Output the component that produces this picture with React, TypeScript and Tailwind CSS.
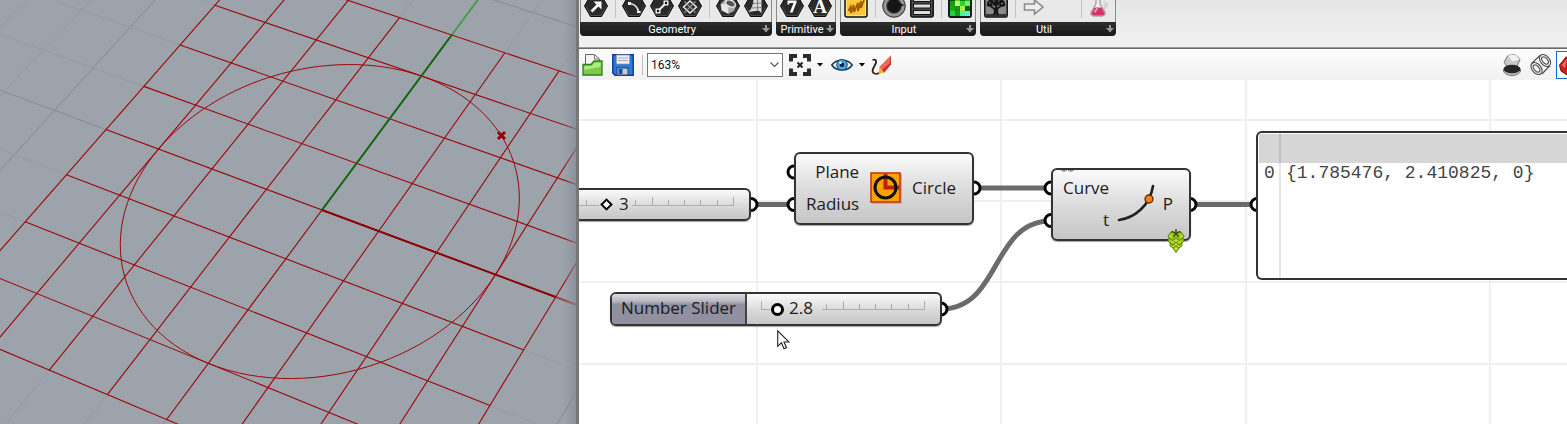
import React from "react";

/* ---------- Perspective viewport ---------- */

function project(x: number, y: number): [number, number] {
  const w = 1 - 0.00984 * x + 0.02245 * y;
  return [(322 + 52.96 * x + 42.57 * y) / w, (210 + 18.83 * x - 42.96 * y) / w];
}

function PlaneLine({ from, to, color, width = 1 }: { from: [number, number]; to: [number, number]; color: string; width?: number }) {
  const [x1, y1] = project(from[0], from[1]);
  const [x2, y2] = project(to[0], to[1]);
  return <line x1={x1} y1={y1} x2={x2} y2={y2} stroke={color} strokeWidth={width} />;
}

const outer = [-10, -9, -8, -7, -6, -5, -4, -3, -2, -1, 0, 1, 2, 3, 4, 5, 6, 7, 8];
const inner = [-4, -3, -2, -1, 0, 1, 2, 3, 4];

const circlePath =
  Array.from({ length: 121 }, (_, i) => {
    const a = (i / 120) * Math.PI * 2;
    const [x, y] = project(3 * Math.cos(a), 3 * Math.sin(a));
    return `${i ? "L" : "M"}${x.toFixed(2)} ${y.toFixed(2)}`;
  }).join("") + "Z";

function Viewport() {
  return (
    <section aria-label="Perspective viewport" className="relative w-[576px] shrink-0 overflow-hidden bg-[#9da3ab]">
      <svg className="absolute left-0 top-0 h-[424px] w-[576px]" viewBox="0 0 576 424">
        {outer.map((n) => (
          <g key={n}>
            <PlaneLine from={[n, -9]} to={[n, 12]} color={n % 5 ? "#959aa2" : "#858a92"} />
            <PlaneLine from={[-10, n]} to={[8, n]} color={n % 5 ? "#959aa2" : "#858a92"} />
          </g>
        ))}
        <PlaneLine from={[0, 4]} to={[0, 8]} color="#4b9a4e" width={2} />
        <PlaneLine from={[4, 0]} to={[6, 0]} color="#98484d" width={2} />
        {inner.map((n) => (
          <g key={n}>
            <PlaneLine from={[n, -4]} to={[n, 4]} color="#9c080c" width={1.1} />
            <PlaneLine from={[-4, n]} to={[4, n]} color="#9c080c" width={1.1} />
            <PlaneLine from={[4, n]} to={[4, n]} color="#9c080c" />
          </g>
        ))}
        <PlaneLine from={[0, 0]} to={[0, 4]} color="#0a6a0a" width={2} />
        <PlaneLine from={[0, 0]} to={[4, 0]} color="#8c0000" width={2} />
        <path d={circlePath} fill="none" stroke="#9c080c" strokeWidth="1" />
        <path d="M498 132l7 7M505 132l-7 7" stroke="#960000" strokeWidth="3" />
      </svg>
      <div className="absolute inset-y-0 right-0 w-3 bg-linear-to-r from-transparent to-[#848b97]/70" />
    </section>
  );
}

/* ---------- Ribbon ---------- */

function Hex({ children }: { children?: React.ReactNode }) {
  return (
    <svg viewBox="0 0 24 24" className="size-6">
      <path d="M6.5 1.5h11L23.5 12l-6 10.500h-11L.5 12z" fill="#2a2a2a" stroke="#0c0c0c" strokeLinejoin="round" />
      <path d="M2 12.500L7 21.500h10l5-9" fill="none" stroke="#555" strokeWidth=".8" />
      {children}
    </svg>
  );
}

const PointIcon = () => (
  <Hex>
    <path d="M7.500 17.500l7-7" stroke="#fff" strokeWidth="2.600" />
    <path d="M9.500 7.500h8v8z" fill="#fff" />
  </Hex>
);
const ArcIcon = () => (
  <Hex>
    <path d="M8 9.500c4.500.5 8 4 8.500 8.500" stroke="#eee" strokeWidth="1.600" fill="none" />
    <path d="M6 8h3v3H6zM15 17h3.500v2H15z" fill="#fff" />
  </Hex>
);
const LineIcon = () => (
  <Hex>
    <path d="M8 17l8-8" stroke="#fff" strokeWidth="1.800" />
    <path d="M6.200 15.200h3.600v3.600H6.200zM14.200 7.200h3.600v3.600h-3.600z" fill="#111" stroke="#fff" strokeWidth="1.300" />
  </Hex>
);
const GridIcon = () => (
  <Hex>
    <path d="M12 7l6.500 6-6.500 6-6.500-6z" fill="#333" stroke="#eee" strokeWidth="1.400" />
    <path d="M6.500 7.500l11 11M17.500 7.500l-11 11" stroke="#999" strokeWidth="1.100" />
  </Hex>
);
const BrepIcon = () => (
  <Hex>
    <path d="M4.500 10l5-5h7l4 6-2.500 6-5.500 3-7-3.500z" fill="#a8a8a8" />
    <ellipse cx="14.500" cy="9.500" rx="5" ry="3.200" transform="rotate(25 14.500 9.500)" fill="#555" stroke="#eee" strokeWidth="1.300" />
    <path d="M5 10.500l4-1 3.500 4-.5 6-6-3z" fill="#e6e6e6" />
  </Hex>
);
const MeshIcon = () => (
  <Hex>
    <path d="M9.500 4l8-1v16l-3-2.500-10 1.500c4-4 5-9 5-14z" fill="#dcdcdc" />
    <path d="M13.500 4v12.500M9 9.500l8.500-.500M7.500 14l10-.500" stroke="#777" strokeWidth=".9" />
  </Hex>
);
const IntegerIcon = () => (
  <Hex>
    <path d="M7.500 6.500h9v2l-4 10H9.800l3.800-9.500H9.300v1.500H7.500z" fill="#fff" />
  </Hex>
);
const LetterIcon = () => (
  <Hex>
    <text x="12" y="18.500" textAnchor="middle" fontFamily="Liberation Serif, serif" fontWeight="700" fontSize="19" fill="#fff">A</text>
  </Hex>
);
const GraphIcon = () => (
  <svg viewBox="0 0 24 24" className="size-6">
    <rect x="1" y="1" width="22" height="22" rx="2" fill="#ffe873" stroke="#111" strokeWidth="1.500" />
    <rect x="3" y="3" width="18" height="18" fill="#ffc83a" />
    <path d="M4.500 17l2-4 .5 6 2.500-8 .5 7 4-9v8l3-10v7l3-8" fill="none" stroke="#a35d00" strokeWidth="1.900" />
  </svg>
);
const KnobIcon = () => (
  <svg viewBox="0 0 24 24" className="size-6">
    <circle cx="12" cy="12" r="11.300" fill="#8b8b8b" stroke="#333" />
    <circle cx="12" cy="12" r="9" fill="#666" stroke="#b5b5b5" />
    <path d="M12 5a7 7 0 1 0 7 7.500l3.500-1.500-4-1.500A7 7 0 0 0 12 5z" fill="#151515" />
  </svg>
);
const ListIcon = () => (
  <svg viewBox="0 0 24 24" className="size-6">
    <rect x=".8" y="1" width="22.400" height="22" rx="2" fill="#4b4b4b" stroke="#111" strokeWidth="1.500" />
    <path d="M3.500 3.500h17v4h-17zM3.500 10h17v4h-17zM3.500 16.500h17v4h-17z" fill="#ddd" stroke="#111" />
  </svg>
);
const swatches = ["#173f0a", "#49d52e", "#0b7010", "#1fb81b", "#0aa00e", "#b5ff6a", "#27d727", "#6df072", "#10ad16", "#1e8f1c", "#9ff04e", "#09600b", "#2bcf45", "#12a016", "#4ff0a0", "#58f2cf"];
const SwatchIcon = () => (
  <svg viewBox="0 0 24 24" className="size-6">
    <rect x=".8" y=".8" width="22.400" height="22.400" rx="2" fill="#0b3d0b" stroke="#111" strokeWidth="1.500" />
    {swatches.map((c, i) => (
      <rect key={i} x={2 + (i % 4) * 5} y={2 + Math.floor(i / 4) * 5} width="5" height="5" fill={c} />
    ))}
  </svg>
);
const TreeIcon = () => (
  <svg viewBox="0 0 24 24" className="size-6">
    <rect x=".8" y="1" width="22.400" height="22" rx="1.500" fill="#8a8a8a" stroke="#111" strokeWidth="1.500" />
    <path d="M2 20h20v2H2z" fill="#333" />
    <path d="M9.500 21c2-2 1.500-5 1-7M14.500 21c-2-2-1.500-5-1-7" stroke="#161616" strokeWidth="2" fill="none" />
    <path d="M12 20V10M12 16L5 11M12 15l7-4M12 12L8 6M12 12l4-6M6 12l-3-1M18 12l3-1" stroke="#161616" strokeWidth="1.800" fill="none" />
    <path d="M3 12c-1-5 3-8 9-8s10 3 9 8c-3 1-4-1-6 0-2-1-4-1-6 0-2-1-3 1-6 0z" fill="#161616" />
    <path d="M5 9h1.500M9 7h1.500M14 7h1.500M17 9.500h2M8 11h1.500M14.500 11h1" stroke="#8a8a8a" strokeWidth="1.200" />
  </svg>
);
const ArrowIcon = () => (
  <svg viewBox="0 0 24 24" className="size-6">
    <path d="M2.500 10h10V6L21 13l-8.500 7v-4h-10z" fill="#eee" stroke="#8a8a8a" strokeWidth="1.600" />
  </svg>
);
const FlaskIcon = () => (
  <svg viewBox="0 0 24 24" className="size-6">
    <path d="M14 21l7-11-5-3z" fill="#d6d6d6" />
    <path d="M8 0h4v10l5 8.500c1 2-1 3.500-3 3.500H6c-2 0-4-1.500-3-3.500L8 10z" fill="#f3eef1" stroke="#8d7f86" />
    <path d="M6.500 13.500h7l3 5.500c.5 1.500-1 2.500-2.500 2.500H6c-1.500 0-3-1-2.500-2.500z" fill="#d6336c" />
    <path d="M5.500 17l3-3h2l-3 5z" fill="#f28bb0" />
  </svg>
);

const Sep = () => <span className="h-[18px] w-1.5 shrink-0 pl-[3px]"><span className="block h-full w-px bg-[#c4c4c4]" /></span>;
const Tool = ({ label, children }: { label: string; children: React.ReactNode }) => (
  <button type="button" aria-label={label} className="size-6 shrink-0">{children}</button>
);

function Group({ title, children }: { title: string; children: React.ReactNode }) {
  return (
    <div className="flex shrink-0 flex-col rounded-b-sm bg-[#e9e9e9]">
      <div className="flex h-[22px] items-end gap-1 overflow-hidden border-x border-[#8a8a8a] px-[3px] pb-1">{children}</div>
      <button type="button" className="flex h-3.5 items-center rounded-b-sm bg-linear-to-b from-[#2e2e2e] to-[#181818] px-0.5 font-['Roboto',sans-serif] text-[11px] leading-none text-white">
        <span className="flex-1 text-center">{title}</span>
        <svg viewBox="0 0 8 8" className="size-2">
          <path d="M3 0h2v3h3L4 7.500 0 3h3z" fill="#999" />
        </svg>
      </button>
    </div>
  );
}

function Ribbon() {
  return (
    <header className="flex h-12 items-start gap-1 overflow-hidden border-b border-[#9b9b9b] bg-linear-to-b from-[#e6e6e6] to-[#f1f1f1] pl-px">
      <Group title="Geometry">
        <Tool label="Point"><PointIcon /></Tool>
        <Sep />
        <Tool label="Arc"><ArcIcon /></Tool>
        <Tool label="Line"><LineIcon /></Tool>
        <Tool label="Plane"><GridIcon /></Tool>
        <Sep />
        <Tool label="Brep"><BrepIcon /></Tool>
        <Tool label="Mesh"><MeshIcon /></Tool>
      </Group>
      <Group title="Primitive">
        <Tool label="Integer"><IntegerIcon /></Tool>
        <Tool label="Text"><LetterIcon /></Tool>
      </Group>
      <Group title="Input">
        <Tool label="Graph mapper"><GraphIcon /></Tool>
        <Sep />
        <Tool label="Control knob"><KnobIcon /></Tool>
        <Tool label="Value list"><ListIcon /></Tool>
        <Sep />
        <Tool label="Colour swatch"><SwatchIcon /></Tool>
      </Group>
      <Group title="Util">
        <Tool label="Tree"><TreeIcon /></Tool>
        <Sep />
        <Tool label="Relay"><ArrowIcon /></Tool>
        <span className="w-6" />
        <Sep />
        <Tool label="Experiment"><FlaskIcon /></Tool>
      </Group>
    </header>
  );
}

/* ---------- Canvas toolbar ---------- */

const Caret = () => (
  <svg viewBox="0 0 6 4" className="h-1 w-1.5"><path d="M0 0h6L3 3.500z" fill="#000" /></svg>
);

function Toolbar() {
  return (
    <div className="flex h-8 items-center overflow-hidden border-t border-[#6a6a6a] bg-linear-to-b from-[#fdfdfd] to-[#f1f1f1] pl-[3px]">
      <button type="button" aria-label="Open" className="mr-2 shrink-0">
        <svg viewBox="0 0 22 24" className="h-6 w-[22px]">
          <path d="M3.500 11V1.500h9l5 4.500v6" fill="#f4f4f4" stroke="#666" />
          <path d="M12.500 1.500V6h5" fill="none" stroke="#777" />
          <path d="M1 11.500h8L12 8h8v14H1z" fill="#7ccb45" stroke="#2f7f14" strokeWidth="1.300" />
          <path d="M2.500 13h7.300l2.800-3.300H18.500v4L2.500 17z" fill="#b0e98a" />
        </svg>
      </button>
      <button type="button" aria-label="Save" className="shrink-0">
        <svg viewBox="0 0 22 22" className="size-[22px]">
          <path d="M.8.800h20.400v20.400H3L.8 19z" fill="#2b78d8" stroke="#123f96" strokeWidth="1.500" />
          <rect x="4.500" y="1" width="13" height="9" fill="#eee" stroke="#999" strokeWidth=".7" />
          <path d="M6 4h10M6 6.500h10" stroke="#aaa" />
          <rect x="5" y="14" width="11" height="7" fill="#c9c9c9" stroke="#123f96" />
          <rect x="6.500" y="15" width="4" height="5" fill="#174fb0" />
        </svg>
      </button>
      <span className="ml-2 h-5 border-l border-[#bdbdbd]" />
      <div className="relative ml-1 flex shrink-0 items-center">
        <select aria-label="Zoom level" defaultValue="163" className="h-6 w-[136px] appearance-none border border-[#767676] bg-white pl-[3px] font-['Roboto',sans-serif] text-xs text-[#111]">
          <option value="163">163%</option>
        </select>
        <svg viewBox="0 0 9 5" className="pointer-events-none absolute right-1 h-[5px] w-[9px]">
          <path d="M.5.500l4 4 4-4" fill="none" stroke="#555" strokeWidth="1.100" />
        </svg>
      </div>
      <button type="button" aria-label="Zoom extents" className="ml-1.5 flex shrink-0 items-center gap-1.5">
        <svg viewBox="0 0 22 22" className="size-[22px]">
          <path d="M2 7.500V2h6M14 2h6v5.500M20 14.500V20h-6M8 20H2v-5.500" fill="none" stroke="#2b2b2b" strokeWidth="4" />
          <path d="M8.500 8.500l5 5M13.500 8.500l-5 5" stroke="#222" strokeWidth="2" />
        </svg>
        <Caret />
      </button>
      <button type="button" aria-label="Preview" className="ml-2 flex shrink-0 items-center gap-1.5">
        <svg viewBox="0 0 22 16" className="h-4 w-[22px]">
          <path d="M.8 8C5 1.500 17 1.500 21.200 8 17 14.500 5 14.500.8 8z" fill="#e4f1f8" stroke="#16364a" strokeWidth="1.500" />
          <circle cx="11" cy="7.800" r="5.300" fill="#4aa5e0" stroke="#174f80" />
          <circle cx="11" cy="7.800" r="2.300" fill="#0b1d2c" />
          <circle cx="9.500" cy="5.800" r="1.200" fill="#fff" />
        </svg>
        <Caret />
      </button>
      <button type="button" aria-label="Sketch" className="ml-1.5 shrink-0">
        <svg viewBox="0 0 22 22" className="size-[22px]">
          <path d="M1.500 6c4-1.500 4.500 1.500 2.500 5S0 18 3.500 19.500c3.500 1 5.500-.5 7-2.500" fill="none" stroke="#3b1c14" strokeWidth="1.800" />
          <path d="M8.500 13L20 1.500v9L13 19z" fill="#c9302a" />
          <path d="M8.500 13L20 1.500l-1.500 8L11 16z" fill="#ee6a5c" />
          <path d="M8.500 13l4.500 5.500-5.500 1.500z" fill="#f0b73a" />
        </svg>
      </button>
      <span className="flex-1" />
      <button type="button" aria-label="No preview" className="mr-2 shrink-0">
        <svg viewBox="0 0 20 24" className="h-6 w-5">
          <path d="M2 9l4-6.500 7-1 5 5-3 7-9 1.500z" fill="#c8c8c8" stroke="#777" />
          <path d="M6 2.500l7-1 4.500 5-7 2z" fill="#f2f2f2" />
          <path d="M1.500 16.500v2c3 5.500 14 5.500 17 0v-2z" fill="#b9b9b9" stroke="#666" strokeWidth=".8" />
          <ellipse cx="10" cy="16" rx="8.500" ry="4.300" fill="#262626" />
        </svg>
      </button>
      <button type="button" aria-label="Wireframe preview" className="mr-1 shrink-0">
        <svg viewBox="0 0 22 24" className="h-6 w-[22px]" fill="none" stroke="#4a4a4a" strokeWidth="1.100">
          <ellipse cx="15" cy="7.500" rx="6.800" ry="4.500" transform="rotate(50 15 7.500)" />
          <ellipse cx="15" cy="7.500" rx="4.300" ry="2.400" transform="rotate(50 15 7.500)" />
          <ellipse cx="6.500" cy="15.500" rx="6.800" ry="4.500" transform="rotate(50 6.500 15.500)" />
          <ellipse cx="6.500" cy="15.500" rx="4.300" ry="2.400" transform="rotate(50 6.500 15.500)" />
          <path d="M10 2.500L1.500 10.500M20 12.500L12 21" />
        </svg>
      </button>
      <button type="button" aria-label="Shaded preview" className="h-7 w-[11px] shrink-0 overflow-hidden border border-r-0 border-[#0b6fd0] bg-white">
        <svg viewBox="0 0 24 24" className="h-6 w-6">
          <path d="M2.500 12L9 4h13v18H10l-6-4z" fill="#c91f1f" stroke="#7d0c0c" />
          <path d="M4.500 12L10 6l-2 9z" fill="#f06a5c" />
        </svg>
      </button>
    </div>
  );
}

/* ---------- Canvas nodes ---------- */

const nodeClass =
  "absolute flex rounded-md border-2 border-[#333] bg-linear-to-b from-[#fbfbfb] via-[#dcdcdc] to-[#c6c6c6] shadow-[0_1px_1px_rgba(0,0,0,0.35)]";

const Port = ({ x, y }: { x: number; y: number }) => <circle cx={x} cy={y} r="6" fill="#fff" stroke="#000" strokeWidth="3" />;

function Wires() {
  return (
    <svg className="absolute left-0 top-0 h-[344px] w-[988px]" viewBox="0 0 988 344" fill="none">
      <g stroke="#6b6b6b" strokeWidth="5">
        <path d="M172 124.500H215M395 108H472M611 124.500H678M362 229C422 229 412 141 472 141" />
      </g>
      <Port x={172} y={124.500} />
      <Port x={215} y={92} />
      <Port x={215} y={124.500} />
      <Port x={395} y={108} />
      <Port x={472} y={108} />
      <Port x={472} y={140.500} />
      <Port x={611} y={124.500} />
      <Port x={678} y={124.500} />
      <Port x={362} y={229} />
    </svg>
  );
}

function CircleNode() {
  return (
    <div className={`${nodeClass} left-[215px] top-[72px] h-[73px] w-[180px] items-center justify-between pb-0.5 pl-2.5 pr-4`}>
      <div className="flex flex-col items-end text-[17px] leading-8">
        <span>Plane</span>
        <span>Radius</span>
      </div>
      <svg viewBox="0 0 32 32" className="size-8">
        <rect x="2" y="2" width="30" height="30" fill="#b5b5b5" />
        <rect x="1" y="1" width="29" height="29" fill="#ffa200" stroke="#c93a10" strokeWidth="1.600" />
        <path d="M15.500 2v13.500H29" fill="none" stroke="#c01f10" strokeWidth="4" />
        <circle cx="15.500" cy="15.500" r="10.500" fill="none" stroke="#111" strokeWidth="3" />
      </svg>
      <span className="text-[17px]">Circle</span>
    </div>
  );
}

function CurveNode() {
  return (
    <div className={`${nodeClass} left-[472px] top-[88px] h-[73px] w-[140px] items-center justify-between pb-0.5 pl-2.5 pr-4`}>
      <div className="flex flex-col items-end text-[17px] leading-8">
        <span>Curve</span>
        <span>t</span>
      </div>
      <svg viewBox="0 0 40 40" className="size-10">
        <path d="M3 36C18 34 34 22 37 2" fill="none" stroke="#222" strokeWidth="2.600" strokeLinecap="round" />
        <circle cx="33" cy="15" r="4" fill="#f08010" stroke="#5a2a08" strokeWidth="1.300" />
      </svg>
      <span className="text-[17px]">P</span>
      <svg viewBox="0 0 14 4" className="absolute left-2 top-0 h-1 w-3.5">
        <path d="M0 0h6Q3 3 0 0M7 0h6Q10 3 7 0" fill="#999" stroke="#999" />
      </svg>
      <svg viewBox="0 0 18 24" className="absolute -bottom-3.5 right-1 h-6 w-[18px]">
        <path d="M9 4L4 3 1 7l1 2-1 3 2 2v3l3 2 1 2 2 2.500 2-2.500 1-2 3-2v-3l2-2-1-3 1-2-3-4z" fill="#9fc81c" stroke="#5d7f0c" strokeWidth=".9" />
        <path d="M9 0v6M9 4L4.500 2.500M9 4l4.500-1.500M9 4L6.500 8M9 4l2.500 4" stroke="#3f5a08" strokeWidth="1.500" />
        <path d="M2.500 9l3 2.500L9 9l3.500 2.500 3-2.500M3 14l3 2 3-3 3 3 3-2M6 19l3-2.500 3 2.500" fill="none" stroke="#5d7f0c" />
        <path d="M3.500 6.500v1.500M14.500 6.500v1.500M5 12.500v1M9 10.500v1.500M13 12.500v1M9 14.500v1.500M6.500 17v1M11.500 17v1M9 19v2" stroke="#dcf25a" strokeWidth="1.600" />
      </svg>
    </div>
  );
}

const Ticks = ({ hide }: { hide: [number, number] }) => (
  <svg viewBox="0 0 165 12" className="absolute left-1.5 top-1/2 h-3 w-[165px] -translate-y-[9px]" stroke="#adadad">
    <path d={`M0 9.500H${hide[0]}M${hide[1]} 9.500H164`} />
    {Array.from({ length: 11 }, (_, i) => Math.round(i * 16.3) + 0.5)
      .filter((x) => x <= hide[0] || x >= hide[1])
      .map((x) => (
        <path key={x} d={`M${x} ${x < 1 || x > 160 || Math.abs(x - 82) < 2 ? 1 : 4}V9.500`} />
      ))}
  </svg>
);

const rangeClass =
  "absolute inset-x-0 top-0 h-full w-full appearance-none bg-transparent [&::-webkit-slider-thumb]:appearance-none [&::-webkit-slider-thumb]:border-black [&::-webkit-slider-thumb]:bg-white";

function RadiusSlider() {
  return (
    <div className={`${nodeClass} left-[-20px] top-[108px] h-[33px] w-[192px] justify-end pr-2.5`}>
      <div className="relative w-[175px]">
        <Ticks hide={[29, 62]} />
        <input type="range" aria-label="Radius" min={0} max={13} defaultValue={3}
          className={`${rangeClass} [&::-webkit-slider-thumb]:size-[9px] [&::-webkit-slider-thumb]:rotate-45 [&::-webkit-slider-thumb]:border-2`} />
        <output className="pointer-events-none absolute inset-y-0 left-[55px] flex items-center pb-0.5 text-[17px]">3</output>
      </div>
    </div>
  );
}

function NumberSlider() {
  return (
    <div className={`${nodeClass} left-[31px] top-[212px] h-[34px] w-[332px]`}>
      <label htmlFor="number-slider" className="flex w-[135px] items-center justify-center rounded-l border-r-2 border-[#444] bg-linear-to-b from-[#dcdce0] via-[#b4b4be] via-25% to-[#9090a0] to-35% pb-0.5 text-[17px]">
        Number Slider
      </label>
      <div className="relative ml-2 w-[175px]">
        <Ticks hide={[9, 61]} />
        <input id="number-slider" type="range" min={0} max={28} step={0.1} defaultValue={2.8}
          className={`${rangeClass} [&::-webkit-slider-thumb]:size-[13px] [&::-webkit-slider-thumb]:rounded-full [&::-webkit-slider-thumb]:border-[3px]`} />
        <output htmlFor="number-slider" className="pointer-events-none absolute inset-y-0 left-[34px] flex items-center pb-0.5 text-[17px]">2.8</output>
      </div>
    </div>
  );
}

function DataPanel() {
  return (
    <section aria-label="Panel" className="absolute left-[677px] right-0 top-[51px] flex h-[149px] flex-col overflow-hidden rounded-l-md border-2 border-r-0 border-[#333] bg-white pl-px pt-px">
      <div className="pointer-events-none absolute inset-y-0 left-[21px] w-0.5 bg-black/10" />
      <div className="h-[29px] shrink-0 bg-[#d6d6d6]" />
      <table className="w-full border-collapse font-['Liberation_Mono',monospace] text-lg leading-5 text-[#444]">
        <tbody>
          <tr>
            <th scope="row" className="w-[23px] p-0 pl-[5px] text-left font-normal">0</th>
            <td className="p-0 pl-1">{"{1.785476, 2.410825, 0}"}</td>
          </tr>
        </tbody>
      </table>
    </section>
  );
}

function Canvas() {
  return (
    <main className="relative flex-1 overflow-hidden bg-white">
      <svg className="absolute inset-0 size-full" stroke="#f0f0f0" strokeWidth="2">
        <path d="M178 0V2000M422 0V2000M667 0V2000M911 0V2000M0 40H3000M0 121H3000M0 202H3000M0 284H3000" />
      </svg>
      <Wires />
      <RadiusSlider />
      <CircleNode />
      <CurveNode />
      <NumberSlider />
      <DataPanel />
      <svg viewBox="0 0 13 20" className="absolute left-[198px] top-[250px] h-5 w-[13px]">
        <path d="M.7.800v15.500l3.700-3.500 2.600 6 2.500-1.100L7 12h5z" fill="#fff" stroke="#222" strokeWidth="1.100" />
      </svg>
    </main>
  );
}

export default function App() {
  return (
    <div className="flex min-h-screen overflow-hidden font-['Open_Sans',sans-serif] text-[#1c1c1c]">
      <Viewport />
      <div className="flex min-w-0 flex-1 flex-col border-l-[3px] border-[#777]">
        <Ribbon />
        <Toolbar />
        <Canvas />
      </div>
    </div>
  );
}
